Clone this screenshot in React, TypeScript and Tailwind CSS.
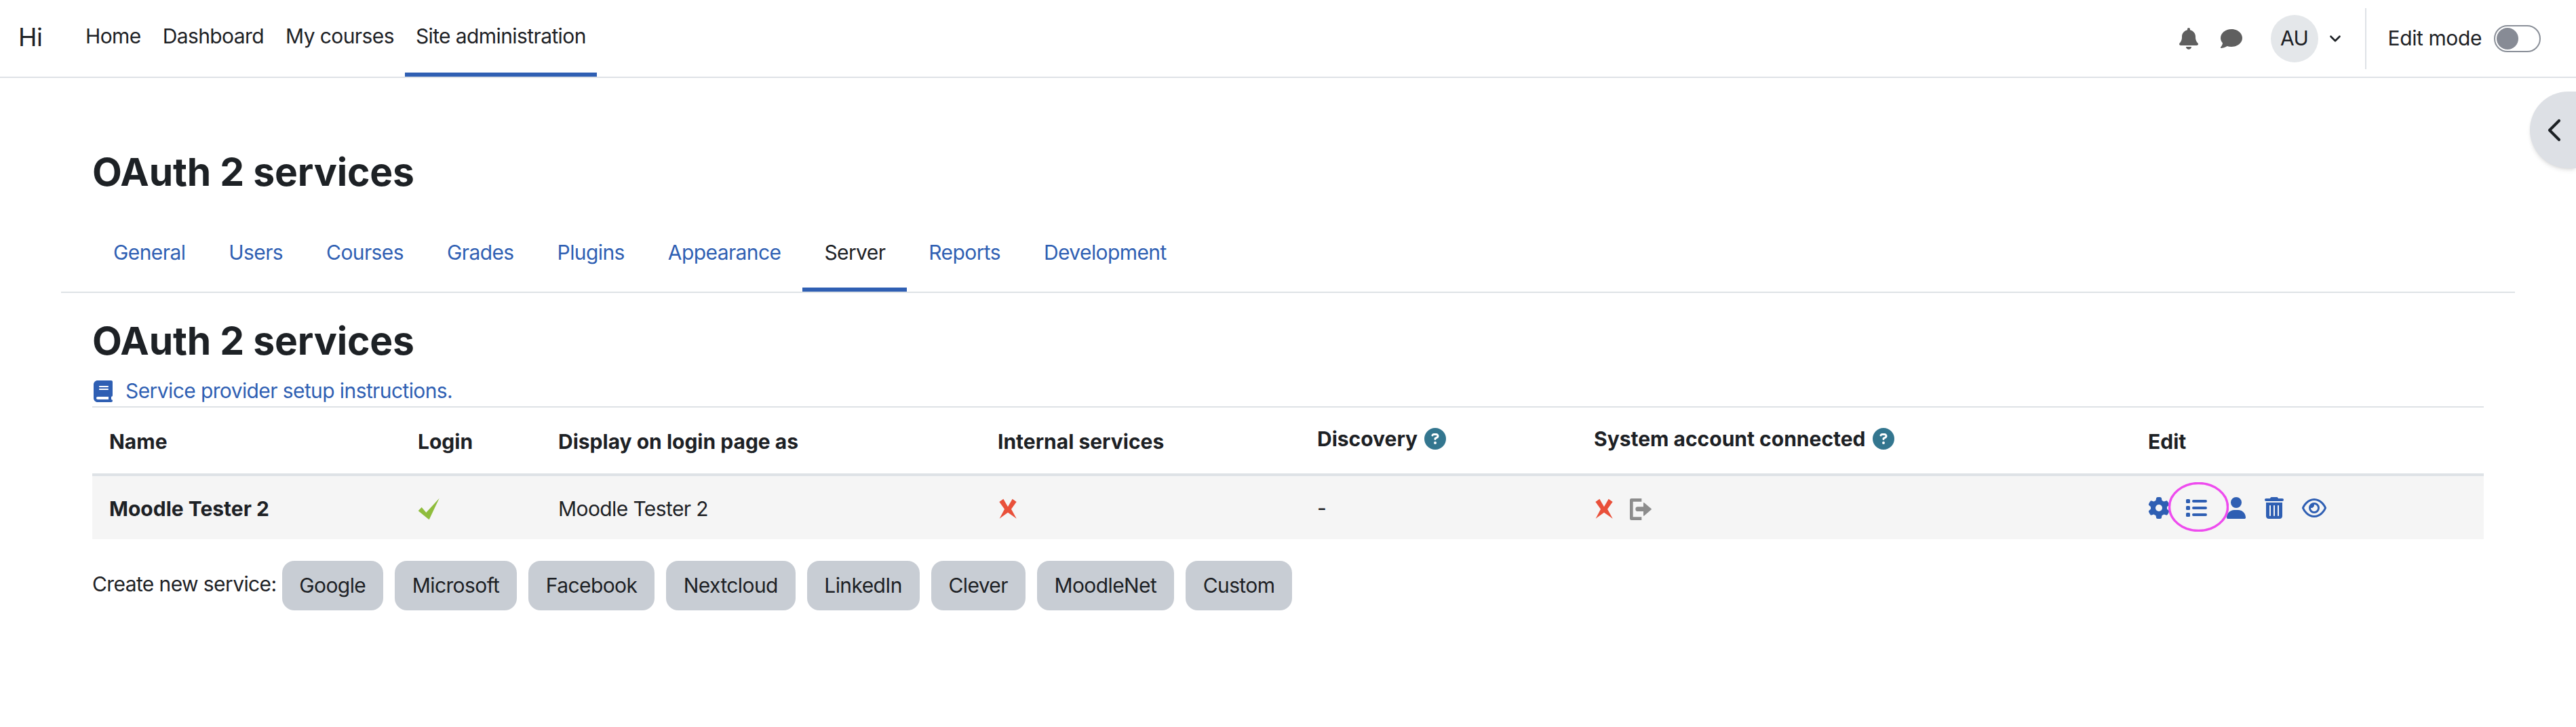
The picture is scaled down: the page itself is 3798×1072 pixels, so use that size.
import { ChevronDown, ChevronLeft } from 'lucide-react';
import {
  FaBell,
  FaBook,
  FaCircleQuestion,
  FaComment,
  FaGear,
  FaRegEye,
  FaTrashCan,
  FaUser,
} from 'react-icons/fa6';

const navItems = ['Home', 'Dashboard', 'My courses', 'Site administration'];
const tabs = ['General', 'Users', 'Courses', 'Grades', 'Plugins', 'Appearance', 'Server', 'Reports', 'Development'];
const services = ['Google', 'Microsoft', 'Facebook', 'Nextcloud', 'LinkedIn', 'Clever', 'MoodleNet', 'Custom'];

function CrossIcon() {
  return (
    <svg viewBox="0 0 90 96" className="h-[32px] w-[30px]">
      <polygon fill="#e9503a" points="7,18 25,5 45,40 65,5 83,18 60,50 83,92 45,65 8,92 30,50" />
    </svg>
  );
}

function CheckIcon() {
  return (
    <svg viewBox="0 0 96 99" className="h-[33px] w-[32px]">
      <polygon fill="#8fbd3c" points="2,58 17,42 37,65 95,2 50,97" />
    </svg>
  );
}

function LogoutIcon() {
  return (
    <svg viewBox="0 0 99 96" className="h-[32px] w-[33px]">
      <path d="M55 7H10V89H55" fill="none" stroke="#8c8c8c" strokeWidth="14" strokeLinejoin="round" />
      <path d="M38 47H68" fill="none" stroke="#8c8c8c" strokeWidth="20" strokeLinecap="round" />
      <path d="M65 20L97 47L65 75Z" fill="#8c8c8c" stroke="#8c8c8c" strokeWidth="4" strokeLinejoin="round" />
    </svg>
  );
}

function ListIcon() {
  return (
    <svg viewBox="0 0 31 26" className="h-[26px] w-[31px]" fill="#2f5fb3">
      <rect x="0" y="0" width="6" height="6" rx="1.5" />
      <rect x="0" y="10" width="6" height="6" rx="1.5" />
      <rect x="0" y="20" width="6" height="6" rx="1.5" />
      <rect x="9" y="1" width="22" height="4" rx="2" />
      <rect x="9" y="11" width="22" height="4" rx="2" />
      <rect x="9" y="21" width="22" height="4" rx="2" />
    </svg>
  );
}

function HelpIcon() {
  return <FaCircleQuestion size={32} className="ml-[10px] inline-block align-[-5px] text-[#33768f]" />;
}

export default function App() {
  return (
    <div
      className="relative min-h-[1072px] w-full overflow-hidden bg-white text-[30px] leading-[45px] tracking-[-0.6px] text-[#1d2125]"
      style={{ fontFamily: 'Inter, "Liberation Sans", sans-serif' }}
    >
      <nav className="flex h-[115px] items-stretch border-b-2 border-[#dee2e6]">
        <div className="ml-[27px] flex w-[83px] items-center pb-[4px] text-[37px]">Hi</div>
        <ul className="flex">
          {navItems.map((item) => (
            <li
              key={item}
              className={`flex items-center border-b-[6px] px-4 ${
                item === 'Site administration' ? 'border-[#2f5fb3]' : 'border-transparent'
              }`}
            >
              {item}
            </li>
          ))}
        </ul>
        <div className="ml-auto flex items-center">
          <FaBell size={32} className="text-[#5f5f5f]" />
          <FaComment size={32} className="ml-[31px] text-[#5f5f5f]" />
          <div className="ml-[42px] flex h-[70px] w-[70px] items-center justify-center rounded-full bg-[#e4e7ea] text-[30px]">
            AU
          </div>
          <ChevronDown size={26} strokeWidth={2.4} className="ml-[12px]" />
          <div className="ml-[31px] h-[90px] w-[2px] bg-[#dee2e6]" />
          <span className="ml-[32px] tracking-[-0.4px]">Edit mode</span>
          <div className="ml-[18px] mr-[52px] flex h-[40px] w-[69px] items-center rounded-full border-2 border-[#8a8f98] px-[2px]">
            <div className="h-[32px] w-[32px] rounded-full bg-[#878b95]" />
          </div>
        </div>
      </nav>

      <button className="absolute right-0 top-[135px] flex h-[113px] w-[68px] items-center justify-start rounded-l-full bg-[#dde0e5] pl-[8px] shadow-md">
        <ChevronLeft size={56} strokeWidth={1.8} className="text-[#1d2125]" />
      </button>

      <main>
        <h1 className="ml-[136px] mt-[103px] text-[57px] font-bold leading-[72px] tracking-[-0.2px]">OAuth 2 services</h1>

        <ul className="mx-[90px] mt-[53px] flex h-[89px] border-b-2 border-[#dee2e6] pl-[45px]">
          {tabs.map((tab) => (
            <li
              key={tab}
              className={`flex items-center border-b-[6px] px-8 pb-[22px] ${
                tab === 'Server' ? 'border-[#2f5fb3] text-[#1d2125]' : 'border-transparent text-[#2f5fb3]'
              }`}
            >
              {tab}
            </li>
          ))}
        </ul>

        <div className="mx-[136px]">
          <h2 className="mt-[35px] text-[57px] font-bold leading-[72px] tracking-[-0.2px]">OAuth 2 services</h2>
          <div className="mt-[15px] flex h-[45px] items-center text-[#2f5fb3]">
            <FaBook size={32} />
            <span className="ml-[17px]">Service provider setup instructions.</span>
          </div>

          <table className="w-full table-fixed border-collapse border-t-2 border-[#dee2e6]">
            <colgroup>
              <col className="w-[455px]" />
              <col className="w-[207px]" />
              <col className="w-[648px]" />
              <col className="w-[471px]" />
              <col className="w-[408px]" />
              <col className="w-[817px]" />
              <col />
            </colgroup>
            <thead>
              <tr className="h-[100px] border-b-4 border-[#dee2e6] text-left font-bold tracking-normal">
                <th className="px-[25px] pt-[4px]">Name</th>
                <th className="px-[25px] pt-[4px]">Login</th>
                <th className="px-[25px] pt-[4px]">Display on login page as</th>
                <th className="px-[25px] pt-[4px]">Internal services</th>
                <th className="px-[25px] pb-[4px]">
                  Discovery
                  <HelpIcon />
                </th>
                <th className="whitespace-nowrap px-[25px] pb-[4px]">
                  System account connected
                  <HelpIcon />
                </th>
                <th className="px-[25px] pt-[4px]">Edit</th>
              </tr>
            </thead>
            <tbody>
              <tr className="h-[95px] bg-[#f5f5f5]">
                <td className="px-[25px] pt-[4px] font-bold tracking-normal">Moodle Tester 2</td>
                <td className="px-[25px] pt-[4px]">
                  <CheckIcon />
                </td>
                <td className="px-[25px] pt-[4px]">Moodle Tester 2</td>
                <td className="px-[25px] pt-[2px]">
                  <CrossIcon />
                </td>
                <td className="px-[25px] pt-[2px]">-</td>
                <td className="px-[25px] pt-[2px]">
                  <div className="flex items-center">
                    <CrossIcon />
                    <div className="ml-[22px] mt-[2px]">
                      <LogoutIcon />
                    </div>
                  </div>
                </td>
                <td className="px-[25px]">
                  <div className="relative flex items-center text-[#2f5fb3]">
                    <FaGear size={32} />
                    <div className="ml-[24px]">
                      <ListIcon />
                    </div>
                    <FaUser size={32} className="ml-[27px]" />
                    <FaTrashCan size={32} className="ml-[24px]" />
                    <FaRegEye size={36} className="ml-[25px]" />
                    <svg viewBox="0 0 89 73" className="absolute left-[30px] top-[-20px] h-[73px] w-[89px]">
                      <ellipse cx="44.5" cy="36.5" rx="43" ry="35" fill="none" stroke="#ee4bee" strokeWidth="3.5" />
                    </svg>
                  </div>
                </td>
              </tr>
            </tbody>
          </table>

          <div className="mt-[32px] flex items-center gap-[17px]">
            <span className="mr-[-9px] pb-[4px]">Create new service:</span>
            {services.map((name) => (
              <button key={name} className="h-[73px] rounded-[18px] bg-[#c8cdd4] px-[25.75px] text-[#1d2125]">
                {name}
              </button>
            ))}
          </div>
        </div>
      </main>
    </div>
  );
}
